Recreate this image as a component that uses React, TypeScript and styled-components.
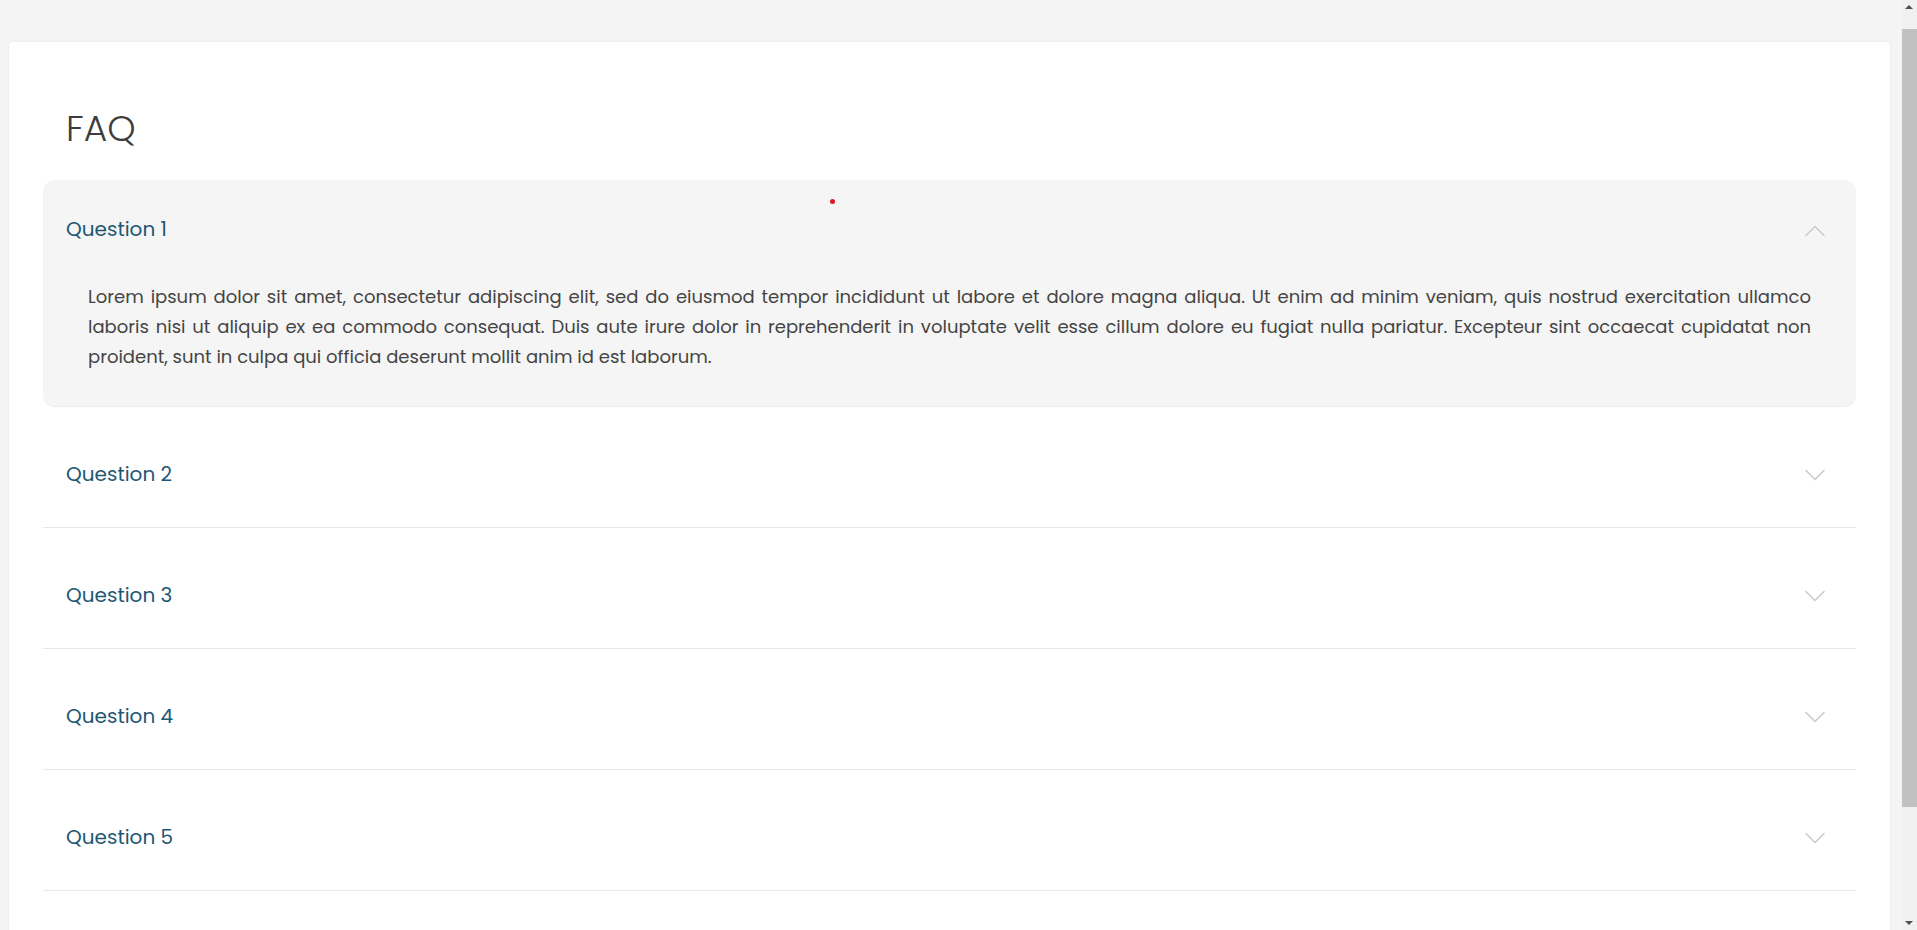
import React, { useState } from "react";
import styled, { createGlobalStyle } from "styled-components";

const GlobalStyle = createGlobalStyle`
  html, body {
    margin: 0;
    padding: 0;
    background: #f4f4f4;
  }
  html {
    scrollbar-width: none;
  }
  ::-webkit-scrollbar {
    display: none;
  }
  body {
    font-family: "Poppins", "Inter", "Liberation Sans", sans-serif;
    color: #444;
  }
`;

const Page = styled("main")`
  padding: 42px 27px 48px 9px;
`;

const Card = styled("section")`
  background: #fff;
  border-radius: 3px;
  box-shadow: 0 0 3px rgba(0, 0, 0, 0.06);
  padding: 64px 34px 100px;
`;

const Title = styled("h1")`
  margin: 0 0 28px;
  padding-left: 23px;
  font-size: 36px;
  line-height: 46px;
  font-weight: 300;
  color: #3d3d3d;
`;

const Item = styled("div")<{ $open: boolean }>`
  position: relative;
  margin-top: ${({ $open }) => ($open ? "0" : "18px")};
  background: ${({ $open }) => ($open ? "#f5f5f5" : "transparent")};
  border-radius: ${({ $open }) => ($open ? "12px" : "0")};
  border-bottom: 1px solid ${({ $open }) => ($open ? "#ececec" : "#e8e8e8")};
`;

const Header = styled("button")`
  display: flex;
  align-items: center;
  justify-content: space-between;
  width: 100%;
  padding: 33px 31px 37px 23px;
  border: 0;
  background: transparent;
  cursor: pointer;
  font: inherit;
  text-align: left;
`;

const Question = styled("span")`
  font-size: 20px;
  line-height: 32px;
  font-weight: 400;
  color: #1e5773;
`;

const Chevron = styled("svg")<{ $up: boolean }>`
  width: 20px;
  height: 13px;
  margin-top: 2px;
  transform: ${({ $up }) => ($up ? "rotate(180deg)" : "none")};
`;

const Answer = styled("p")`
  margin: 0;
  padding: 0 45px 34px;
  font-size: 18px;
  line-height: 30px;
  text-align: justify;
  color: #444;
`;

const Dot = styled("span")`
  position: absolute;
  top: 19px;
  left: 787px;
  width: 5px;
  height: 5px;
  border-radius: 50%;
  background: #e0162b;
`;

/* classic window scrollbar, drawn over the right edge */
const ScrollBar = styled("div")`
  position: fixed;
  top: 0;
  right: 0;
  width: 16px;
  height: 100vh;
  background: #f1f1f1;
`;

const Thumb = styled("div")`
  position: absolute;
  top: 29px;
  bottom: 123px;
  left: 1px;
  right: 0;
  background: #c1c1c1;
`;

const Arrow = styled("span")<{ $down?: boolean }>`
  position: absolute;
  left: 4px;
  ${({ $down }) => ($down ? "bottom: 5px;" : "top: 5px;")}
  width: 0;
  height: 0;
  border-left: 4px solid transparent;
  border-right: 4px solid transparent;
  ${({ $down }) =>
    $down ? "border-top: 4px solid #505050;" : "border-bottom: 4px solid #505050;"}
`;

const lorem =
  "Lorem ipsum dolor sit amet, consectetur adipiscing elit, sed do eiusmod tempor incididunt ut labore et dolore magna aliqua. Ut enim ad minim veniam, quis nostrud exercitation ullamco laboris nisi ut aliquip ex ea commodo consequat. Duis aute irure dolor in reprehenderit in voluptate velit esse cillum dolore eu fugiat nulla pariatur. Excepteur sint occaecat cupidatat non proident, sunt in culpa qui officia deserunt mollit anim id est laborum.";

const questions = ["Question 1", "Question 2", "Question 3", "Question 4", "Question 5"];

const ChevronIcon = ({ up }: { up: boolean }) => (
  <Chevron $up={up} viewBox="0 0 20 13" fill="none">
    <polyline
      points="1,1.5 10,10.5 19,1.5"
      stroke="#cacaca"
      strokeWidth="1.5"
      strokeLinecap="round"
      strokeLinejoin="round"
    />
  </Chevron>
);

export default function App() {
  const [open, setOpen] = useState(0);

  return (
    <>
      <GlobalStyle />
      <Page>
        <Card>
          <Title>FAQ</Title>
          {questions.map((q, i) => (
            <Item key={q} $open={open === i}>
              {open === i && <Dot />}
              <Header onClick={() => setOpen(open === i ? -1 : i)}>
                <Question>{q}</Question>
                <ChevronIcon up={open === i} />
              </Header>
              {open === i && <Answer>{lorem}</Answer>}
            </Item>
          ))}
        </Card>
      </Page>
      <ScrollBar>
        <Arrow />
        <Thumb />
        <Arrow $down />
      </ScrollBar>
    </>
  );
}
